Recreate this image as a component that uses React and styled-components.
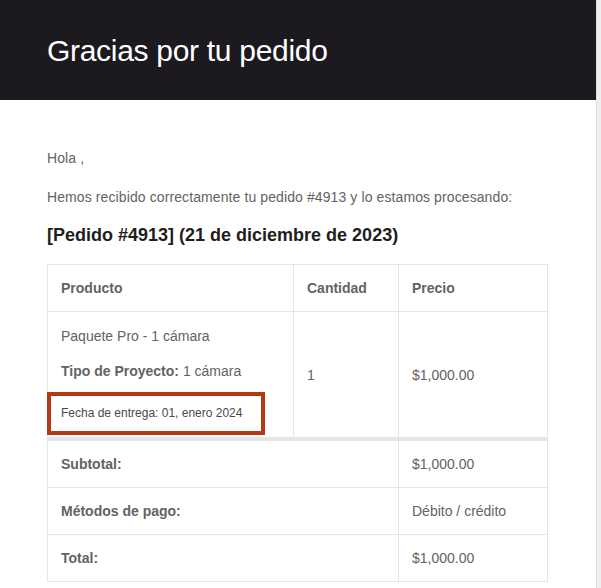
import styled, { createGlobalStyle } from "styled-components";

const items = [
    {
        name: "Paquete Pro - 1 cámara",
        metaKey: "Tipo de Proyecto:",
        metaValue: "1 cámara",
        delivery: "Fecha de entrega: 01, enero 2024",
        qty: 1,
        price: "$1,000.00",
    },
];

const totals = [
    { label: "Subtotal:", value: "$1,000.00" },
    { label: "Métodos de pago:", value: "Débito / crédito" },
    { label: "Total:", value: "$1,000.00" },
];

function App() {
    return (
        <>
            <GlobalStyle />
            <Window>
                <Page>
                    <Header>
                        <Title>Gracias por tu pedido</Title>
                    </Header>
                    <Body>
                        <Text $gap="18px">Hola ,</Text>
                        <Text>Hemos recibido correctamente tu pedido #4913 y lo estamos procesando:</Text>
                        <OrderTitle>[Pedido #4913] (21 de diciembre de 2023)</OrderTitle>
                        <OrderTable>
                            <colgroup>
                                <col style={{ width: "246px" }} />
                                <col style={{ width: "105px" }} />
                                <col />
                            </colgroup>
                            <thead>
                                <tr>
                                    <Th>Producto</Th>
                                    <Th>Cantidad</Th>
                                    <Th>Precio</Th>
                                </tr>
                            </thead>
                            <tbody>
                                {items.map((item) => (
                                    <tr key={item.name}>
                                        <ProductCell>
                                            <div>{item.name}</div>
                                            <Meta>
                                                <strong>{item.metaKey}</strong> {item.metaValue}
                                            </Meta>
                                            <Delivery>{item.delivery}</Delivery>
                                            <Highlight />
                                        </ProductCell>
                                        <Td>{item.qty}</Td>
                                        <Td>{item.price}</Td>
                                    </tr>
                                ))}
                            </tbody>
                            <tfoot>
                                {totals.map((row, i) => (
                                    <tr key={row.label}>
                                        <FootLabel colSpan={2} $first={i === 0}>{row.label}</FootLabel>
                                        <FootValue $first={i === 0}>{row.value}</FootValue>
                                    </tr>
                                ))}
                            </tfoot>
                        </OrderTable>
                    </Body>
                </Page>
                <Scrollbar />
            </Window>
        </>
    );
}

export default App;

const GlobalStyle = createGlobalStyle`
  body {
    margin: 0;
    background: #fff;
    font-family: "Liberation Sans", Arial, sans-serif;
  }
`;

const Window = styled.div`
  display: flex;
  width: 601px;
  height: 588px;
  overflow: hidden;
`;

const Page = styled.div`
  width: 596px;
  flex-shrink: 0;
  background: #fff;
`;

const Scrollbar = styled.div`
  flex: 1;
  background: #efefef;
  border-left: 1px solid #dedede;
`;

const Header = styled.div`
  height: 100px;
  background: #1c1a1e;
  display: flex;
  align-items: center;
  padding: 0 48px 0 47px;
`;

const Title = styled.h1`
  margin: 0;
  color: #fff;
  font-size: 30px;
  font-weight: 300;
  line-height: 45px;
  letter-spacing: -0.3px;
`;

const Body = styled.div`
  padding: 48px 48px 0 47px;
  color: #636363;
  font-size: 14px;
  line-height: 21px;
`;

const Text = styled.p`
  margin: 0 0 ${(p) => p.$gap || "16px"};
  letter-spacing: 0.1px;
`;

const OrderTitle = styled.h2`
  margin: 0 0 17px;
  color: #1e1e1e;
  font-size: 18px;
  font-weight: 700;
  line-height: 23px;
`;

const OrderTable = styled.table`
  width: 501px;
  table-layout: fixed;
  border-collapse: collapse;
  border: 1px solid #e5e5e5;
  color: #636363;
  font-size: 14px;
  line-height: 21px;
`;

const Th = styled.th`
  padding: 13px 13px 12px;
  border: 1px solid #e5e5e5;
  text-align: left;
  font-weight: 700;
`;

const Td = styled.td`
  padding: 14px 13px 12px;
  border: 1px solid #e5e5e5;
  text-align: left;
  vertical-align: middle;
`;

const ProductCell = styled(Td)`
  position: relative;
  padding-bottom: 15px;
`;

const Meta = styled.div`
  margin-top: 14px;
`;

const Delivery = styled.div`
  margin-top: 22px;
  font-size: 12px;
  line-height: 18px;
  color: #4a4a4a;
`;

const Highlight = styled.div`
  position: absolute;
  left: -1px;
  top: 80px;
  width: 218px;
  height: 43px;
  box-sizing: border-box;
  border: 4px solid #b33a12;
`;

const FootLabel = styled.th`
  padding: 13px 13px 12px;
  border: 1px solid #e5e5e5;
  border-top-width: ${(p) => (p.$first ? "4px" : "1px")};
  text-align: left;
  font-weight: 700;
`;

const FootValue = styled.td`
  padding: 13px 13px 12px;
  border: 1px solid #e5e5e5;
  border-top-width: ${(p) => (p.$first ? "4px" : "1px")};
  text-align: left;
`;
